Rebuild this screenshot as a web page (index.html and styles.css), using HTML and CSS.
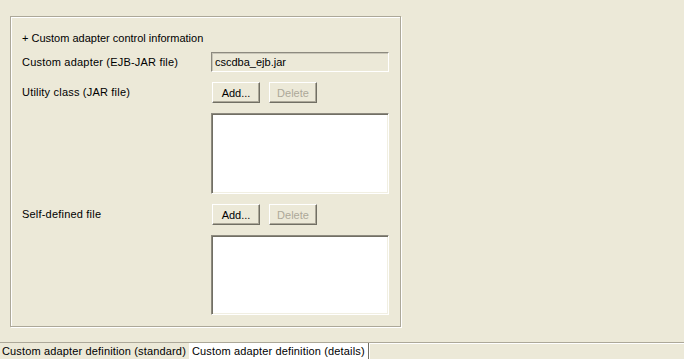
FILE: index.html
```html
<!DOCTYPE html>
<html lang="en">
<head>
    <meta charset="UTF-8">
    <title>Custom adapter definition</title>
    <link rel="stylesheet" href="styles.css">
</head>
<body>
    <div class="page">
        <div class="group">
            <div class="group-title">+ Custom adapter control information</div>
            <div class="grid">
                <div class="label">Custom adapter (EJB-JAR file)</div>
                <div class="field">cscdba_ejb.jar</div>

                <div class="label">Utility class (JAR file)</div>
                <div class="btn-row">
                    <button class="btn">Add...</button>
                    <button class="btn" disabled>Delete</button>
                </div>
                <div></div>
                <div class="listbox"></div>

                <div class="label">Self-defined file</div>
                <div class="btn-row">
                    <button class="btn">Add...</button>
                    <button class="btn" disabled>Delete</button>
                </div>
                <div></div>
                <div class="listbox short"></div>
            </div>
        </div>
    </div>
    <div class="tabs">
        <div class="tab">Custom adapter definition (standard)</div>
        <div class="tab active">Custom adapter definition (details)</div>
        <div class="tab-rest"></div>
    </div>
</body>
</html>
```

FILE: styles.css
```css
body {
    margin: 0;
    background-color: #ece9d8;
    font-family: "Liberation Sans", Arial, sans-serif;
    font-size: 11px;
    color: #000;
    width: 684px;
    height: 359px;
    overflow: hidden;
    display: flex;
    flex-direction: column;
}

.page {
    padding: 16px 0 0 10px;
    height: 326px;
    box-sizing: border-box;
}

.group {
    width: 391px;
    height: 311px;
    box-sizing: border-box;
    border: 1px solid #aca899;
    box-shadow: inset 1px 1px 0 #fff, 1px 1px 0 #fff;
    padding: 14px 11px 0 11px;
}

.group-title {
    height: 14px;
    line-height: 14px;
}

.grid {
    display: grid;
    grid-template-columns: 189px 178px;
    row-gap: 10px;
    margin-top: 7px;
}

.label {
    display: flex;
    align-items: center;
    height: 20px;
    letter-spacing: 0.2px;
}

.field {
    height: 20px;
    box-sizing: border-box;
    border: 1px solid #fff;
    border-top-color: #8d8a7f;
    border-left-color: #8d8a7f;
    box-shadow: inset 1px 1px 0 #c9c6b8;
    padding: 0 3px;
    line-height: 18px;
    background-color: #ece9d8;
}

.btn-row {
    display: flex;
    gap: 9px;
    padding-left: 1px;
}

.btn {
    width: 48px;
    height: 21px;
    box-sizing: border-box;
    background-color: #ece9d8;
    border: 1px solid #716f64;
    border-top-color: #fff;
    border-left-color: #fff;
    box-shadow: inset -1px -1px 0 #aca899;
    font-family: "Liberation Sans", Arial, sans-serif;
    font-size: 11px;
    color: #000;
    padding: 0;
}

.btn:disabled {
    color: #aca899;
}

.listbox {
    height: 81px;
    box-sizing: border-box;
    background-color: #fff;
    border: 1px solid #fff;
    border-top-color: #8d8a7f;
    border-left-color: #8d8a7f;
    box-shadow: inset 1px 1px 0 #716f64, inset -1px -1px 0 #f1efe2;
}

.listbox.short {
    height: 80px;
}

.tabs {
    display: flex;
    margin-top: 16px;
    height: 17px;
    border-top: 1px solid #aca899;
}

.tab {
    padding: 0 3px 0 2px;
    line-height: 16px;
    font-size: 11px;
    letter-spacing: 0.15px;
    border-right: 1px solid #fff;
}

.tab.active {
    background-color: #fff;
    border-right: 1px solid #716f64;
}

.tab-rest {
    flex: 1;
    border-left: 1px solid #fff;
    border-top: 1px solid #fff;
}
```
